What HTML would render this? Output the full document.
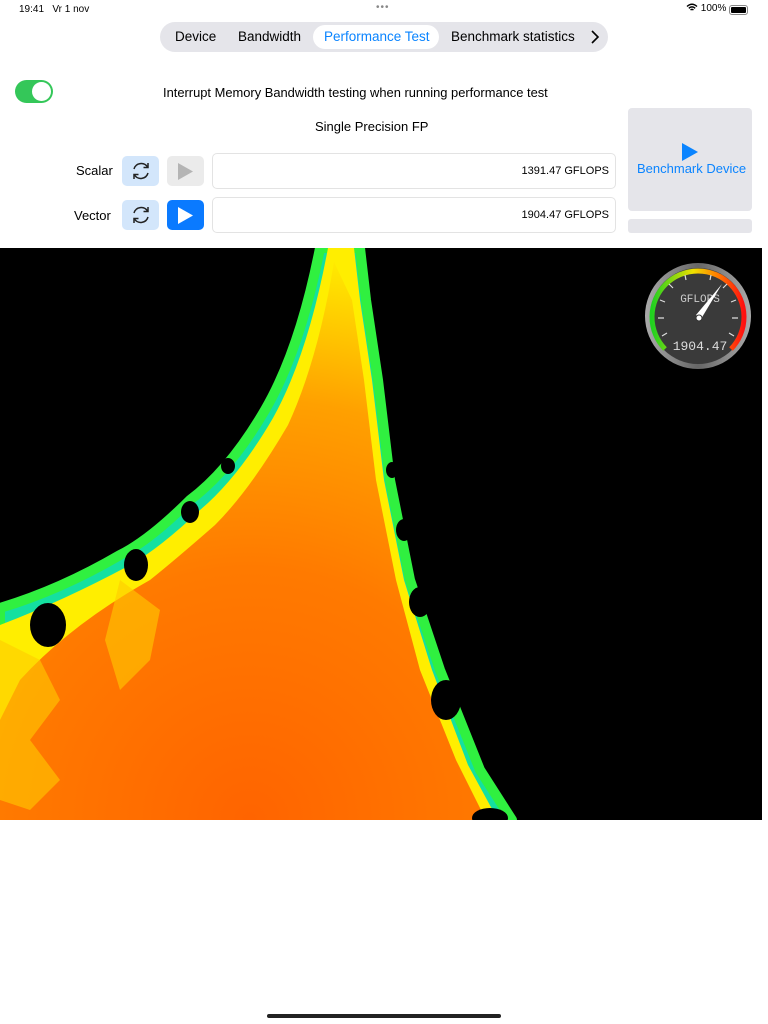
<!DOCTYPE html>
<html><head><meta charset="utf-8"><style>
body{margin:0;width:768px;height:1024px;background:#fff;font-family:"Liberation Sans",sans-serif;position:relative;overflow:hidden;color:#000}
.a{position:absolute}
.seg{left:160px;top:22px;width:448px;height:30px;background:#e5e5ea;border-radius:15px}
.sel{left:313px;top:25px;width:126px;height:24px;background:#fff;border-radius:12px}
.btn{border-radius:5px;width:37px;height:30px}
.box{left:212px;width:404px;height:36px;border:1px solid #e3e3e3;border-radius:5px;font-size:11px;text-align:right;box-sizing:border-box;padding-right:6px;line-height:35px}
.t{font-size:13.5px;top:29px}
</style></head><body>
<div class="a" style="left:19px;top:4px;font-size:10px">19:41&nbsp;&nbsp; Vr 1 nov</div>
<div class="a" style="left:376px;top:2px;font-size:10px;color:#888;letter-spacing:1px">•••</div>
<div class="a" style="left:686px;top:3px;font-size:10px">
<svg width="12" height="9" viewBox="0 0 12 9" style="vertical-align:-1px"><path d="M1 3.5Q6-1 11 3.5M2.8 5.3Q6 2.5 9.2 5.3M4.5 7Q6 5.8 7.5 7" stroke="#000" stroke-width="1.4" fill="none"/></svg> 100%</div>
<div class="a" style="left:729px;top:5px;width:17px;height:8px;border:1px solid #888;border-radius:3px"><div style="margin:1px;height:6px;background:#000;border-radius:1px"></div></div>
<div class="a seg"></div>
<div class="a sel"></div>
<div class="a t" style="left:175px">Device</div>
<div class="a t" style="left:238px">Bandwidth</div>
<div class="a t" style="left:324px;color:#0a84ff">Performance Test</div>
<div class="a t" style="left:451px">Benchmark statistics</div>
<svg class="a" style="left:590px;top:30px" width="10" height="14"><path d="M2 1l6 6-6 6" stroke="#000" stroke-width="1.6" fill="none"/></svg>
<div class="a" style="left:15px;top:80px;width:38px;height:23px;background:#34c759;border-radius:12px"><div style="position:absolute;left:17px;top:2px;width:19px;height:19px;background:#fff;border-radius:50%"></div></div>
<div class="a" style="left:163px;top:85px;font-size:12.9px">Interrupt Memory Bandwidth testing when running performance test</div>
<div class="a" style="left:315px;top:119px;font-size:13px">Single Precision FP</div>
<div class="a" style="left:628px;top:108px;width:124px;height:103px;background:#e5e5ea;border-radius:4px"></div>
<svg class="a" style="left:681px;top:142px" width="18" height="20"><path d="M1 1L17 10 1 19Z" fill="#0a84ff"/></svg>
<div class="a" style="left:637px;top:161px;font-size:13px;color:#0a84ff">Benchmark Device</div>
<div class="a" style="left:628px;top:219px;width:124px;height:14px;background:#e5e5ea;border-radius:3px"></div>
<div class="a" style="left:76px;top:163px;font-size:13px">Scalar</div>
<div class="a" style="left:74px;top:208px;font-size:13px">Vector</div>
<div class="a btn" style="left:122px;top:156px;background:#d3e6fb"></div>
<div class="a btn" style="left:122px;top:200px;background:#d3e6fb"></div>
<svg class="a" style="left:130px;top:160px" width="22" height="22" viewBox="0 0 22 22"><g stroke="#222" stroke-width="1.5" fill="none"><path d="M4 9A7.5 7.5 0 0 1 17.5 7"/><path d="M18 13A7.5 7.5 0 0 1 4.5 15"/><path d="M18 3v4.5h-4.5M4 19v-4.5h4.5"/></g></svg>
<svg class="a" style="left:130px;top:204px" width="22" height="22" viewBox="0 0 22 22"><g stroke="#222" stroke-width="1.5" fill="none"><path d="M4 9A7.5 7.5 0 0 1 17.5 7"/><path d="M18 13A7.5 7.5 0 0 1 4.5 15"/><path d="M18 3v4.5h-4.5M4 19v-4.5h4.5"/></g></svg>
<div class="a btn" style="left:167px;top:156px;background:#ebebeb"></div>
<svg class="a" style="left:177px;top:162px" width="17" height="19"><path d="M1 1L16 9.5 1 18Z" fill="#b4b4b4"/></svg>
<div class="a btn" style="left:167px;top:200px;background:#0a7aff"></div>
<svg class="a" style="left:177px;top:206px" width="17" height="19"><path d="M1 1L16 9.5 1 18Z" fill="#fff"/></svg>
<div class="a box" style="top:153px">1391.47 GFLOPS</div>
<div class="a box" style="top:197px">1904.47 GFLOPS</div>

<svg class="a" style="left:0;top:248px" width="762" height="572" viewBox="0 248 762 572">
<defs>
<radialGradient id="g" cx="250" cy="820" r="560" gradientUnits="userSpaceOnUse">
<stop offset="0" stop-color="#ff6400"/><stop offset="0.45" stop-color="#ff7a00"/><stop offset="0.75" stop-color="#ffa000"/><stop offset="1" stop-color="#ffe800"/></radialGradient>
</defs>
<rect x="0" y="248" width="762" height="572" fill="#000"/>
<path d="M320 248Q300 350 265 410Q230 470 190 500Q150 540 120 555Q60 590 0 608V820H512L480 770 440 670 410 580 390 480 378 380 366 300 360 248Z" fill="#14e0a0" stroke="#30f040" stroke-width="10" stroke-linejoin="round"/>
<path d="M328 248Q308 355 273 418Q238 478 200 510Q160 548 130 565Q65 600 0 625V820H498L468 765 432 670 404 580 384 480 372 380 360 300 354 248Z" fill="#ffee00"/>
<path d="M334 262Q318 360 288 425Q250 490 215 525Q175 560 150 580Q70 625 20 680L0 720V820H486L456 760 420 670 396 580 376 480 364 380 352 300Z" fill="url(#g)"/>
<path d="M0 640 40 660 60 700 30 740 60 780 30 810 0 800Z" fill="#ffcc00" opacity=".6"/>
<path d="M120 580 160 610 150 660 120 690 105 640Z" fill="#ffcc00" opacity=".6"/>
<ellipse cx="48" cy="625" rx="18" ry="22" fill="#000"/>
<ellipse cx="136" cy="565" rx="12" ry="16" fill="#000"/>
<ellipse cx="190" cy="512" rx="9" ry="11" fill="#000"/>
<ellipse cx="228" cy="466" rx="7" ry="8" fill="#000"/>
<ellipse cx="446" cy="700" rx="15" ry="20" fill="#000"/>
<ellipse cx="420" cy="602" rx="11" ry="15" fill="#000"/>
<ellipse cx="404" cy="530" rx="8" ry="11" fill="#000"/>
<ellipse cx="490" cy="818" rx="18" ry="10" fill="#000"/>
<ellipse cx="392" cy="470" rx="6" ry="8" fill="#000"/>
</svg>

<svg class="a" style="left:644px;top:262px" width="108" height="108" viewBox="0 0 108 108">
<defs><linearGradient id="r" x1="0" y1="0" x2="1" y2="0"><stop offset="0" stop-color="#aaa"/><stop offset=".5" stop-color="#666"/><stop offset="1" stop-color="#aaa"/></linearGradient>
<linearGradient id="arc" x1="0" y1="0" x2="1" y2="0"><stop offset="0" stop-color="#20d020"/><stop offset=".45" stop-color="#f0e000"/><stop offset=".7" stop-color="#ff8000"/><stop offset="1" stop-color="#ff1010"/></linearGradient></defs>
<circle cx="54" cy="54" r="53" fill="url(#r)"/>
<circle cx="54" cy="54" r="48" fill="#3a3a3a"/>
<path d="M21 87A46 46 0 1 1 87 87" stroke="url(#arc)" stroke-width="5" fill="none"/>
<g stroke="#ddd" stroke-width="1.2"><path d="M18 74l5-3M14 56h6M16 38l5 2M25 22l4 4M41 13l1 5M67 13l-1 5M83 22l-4 4M92 38l-5 2M94 56h-6M90 74l-5-3"/></g>
<text x="56" y="40" font-size="11" fill="#ccc" text-anchor="middle" font-family="Liberation Mono,monospace">GFLOPS</text>
<text x="56" y="88" font-size="13" fill="#ddd" text-anchor="middle" font-family="Liberation Mono,monospace">1904.47</text>
<path d="M52 53L78 22 57 57Z" fill="#fff"/><circle cx="55" cy="56" r="3" fill="#fff" stroke="#333"/>
</svg>

<div class="a" style="left:267px;top:1014px;width:234px;height:4px;background:#222;border-radius:2px"></div>
</body></html>
